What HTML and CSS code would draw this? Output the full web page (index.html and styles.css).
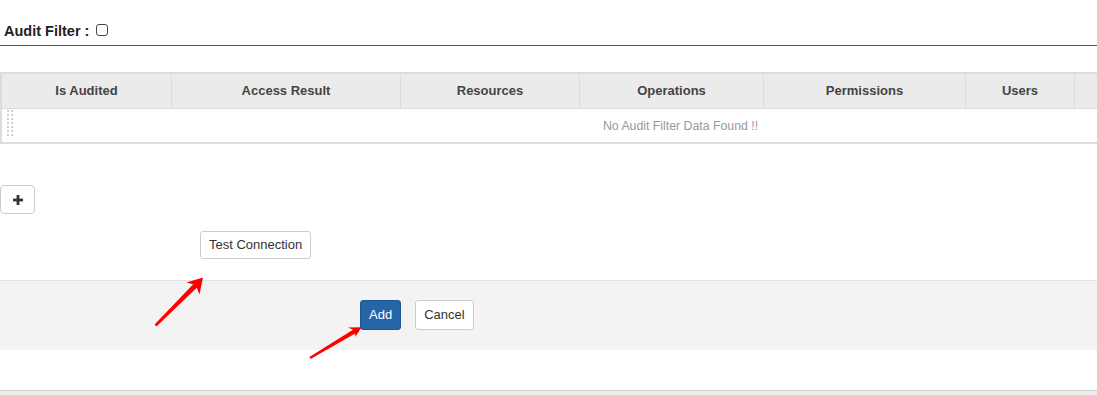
FILE: index.html
```html
<!DOCTYPE html>
<html lang="en">
<head>
<meta charset="utf-8">
<title>Audit Filter</title>
<link rel="stylesheet" href="styles.css">
</head>
<body>
<div class="page">
  <h4 class="title">Audit Filter :<input type="checkbox" class="check"></h4>

  <div class="grid-wrap">
    <div class="grid">
      <div class="head">
        <div class="th">Is Audited</div>
        <div class="th">Access Result</div>
        <div class="th">Resources</div>
        <div class="th">Operations</div>
        <div class="th">Permissions</div>
        <div class="th">Users</div>
        <div class="th"></div>
      </div>
      <div class="body-row">
        <span class="handle"></span>
        <span class="empty">No Audit Filter Data Found !!</span>
      </div>
    </div>
  </div>

  <button class="btn btn-icon" type="button" aria-label="Add row">
    <svg width="10" height="10" viewBox="0 0 10 10"><rect x="3.6" y="0" width="2.8" height="10" fill="#333"/><rect x="0" y="3.6" width="10" height="2.8" fill="#333"/></svg>
  </button>

  <div class="test-row">
    <button class="btn" type="button">Test Connection</button>
  </div>

  <div class="actions">
    <button class="btn btn-primary" type="button">Add</button>
    <button class="btn" type="button">Cancel</button>
  </div>

  <div class="bottom-bar"></div>

  <svg class="arrows" width="1097" height="395" viewBox="0 0 1097 395">
    <polygon fill="#ff0000" points="203,277.5 199.5,294.5 196.8,287.8 156.4,326.4 154.6,324.6 193.2,284.2 186.5,282.5"/>
    <polygon fill="#ff0000" points="361.5,327.3 355.3,337 355.2,333.4 310.6,358.9 309.4,357.1 353,329.8 348,327.6"/>
  </svg>
</div>
</body>
</html>
```

FILE: styles.css
```css
html, body {
  margin: 0;
  padding: 0;
  background: #fff;
}

body {
  font-family: "Liberation Sans", Arial, Helvetica, sans-serif;
  color: #333;
  overflow: hidden;
}

.page {
  position: relative;
  width: 1097px;
  height: 395px;
  overflow: hidden;
}

.title {
  margin: 22px 0 0;
  padding: 0 0 5px 4px;
  font-size: 14.5px;
  line-height: 18px;
  font-weight: bold;
  color: #222;
  border-bottom: 1px solid #3e5d7c;
}

.check {
  appearance: none;
  -webkit-appearance: none;
  width: 12px;
  height: 12px;
  margin: 0 0 0 7px;
  border: 1px solid #444;
  border-radius: 3px;
  background: #fff;
  vertical-align: baseline;
}

.grid-wrap {
  margin-top: 26px;
  overflow: hidden;
}

.grid {
  width: 1357px;
  border: 2px solid #dcdcdc;
  border-right: none;
}

.head {
  display: grid;
  grid-template-columns: 170px 229px 179px 184px 202px 109px 1fr;
  height: 34px;
  background: #ebebeb;
  border-bottom: 1px solid #dcdcdc;
}

.th {
  display: flex;
  align-items: center;
  justify-content: center;
  padding-bottom: 1px;
  font-size: 13px;
  font-weight: bold;
  color: #444;
  border-right: 1px solid #dcdcdc;
}

.body-row {
  position: relative;
  height: 33px;
  display: flex;
  align-items: center;
  justify-content: center;
}

.handle {
  position: absolute;
  left: 3px;
  top: 1px;
  width: 8px;
  height: 28px;
  background: conic-gradient(#cfcfcf 25%, transparent 0) 0 0 / 4px 4px;
}

.empty {
  font-size: 12.3px;
  color: #999;
}

.btn {
  font-family: "Liberation Sans", Arial, Helvetica, sans-serif;
  font-size: 13px;
  color: #333;
  background: #fff;
  border: 1px solid #ccc;
  border-radius: 3px;
  padding: 0 8px;
  height: 28px;
  line-height: 26px;
  cursor: pointer;
}

.btn-icon {
  display: flex;
  align-items: center;
  justify-content: center;
  width: 35px;
  height: 29px;
  padding: 0;
  margin-top: 41px;
  border-radius: 4px;
}

.test-row {
  margin-top: 17px;
  padding-left: 200px;
}

.actions {
  margin-top: 21px;
  height: 50px;
  padding: 19px 0 0 360px;
  display: flex;
  gap: 14px;
  align-items: flex-start;
  background: #f3f3f3;
  border-top: 1px solid #e2e2e2;
}

.actions .btn {
  height: 30px;
  line-height: 28px;
}

.btn-primary {
  color: #fff;
  background: #2565a7;
  border-color: #1f5890;
}

.bottom-bar {
  margin-top: 40px;
  height: 20px;
  border-top: 1px solid #cfcfcf;
  background: #ececec;
}

.arrows {
  position: absolute;
  left: 0;
  top: 0;
  pointer-events: none;
}
```
